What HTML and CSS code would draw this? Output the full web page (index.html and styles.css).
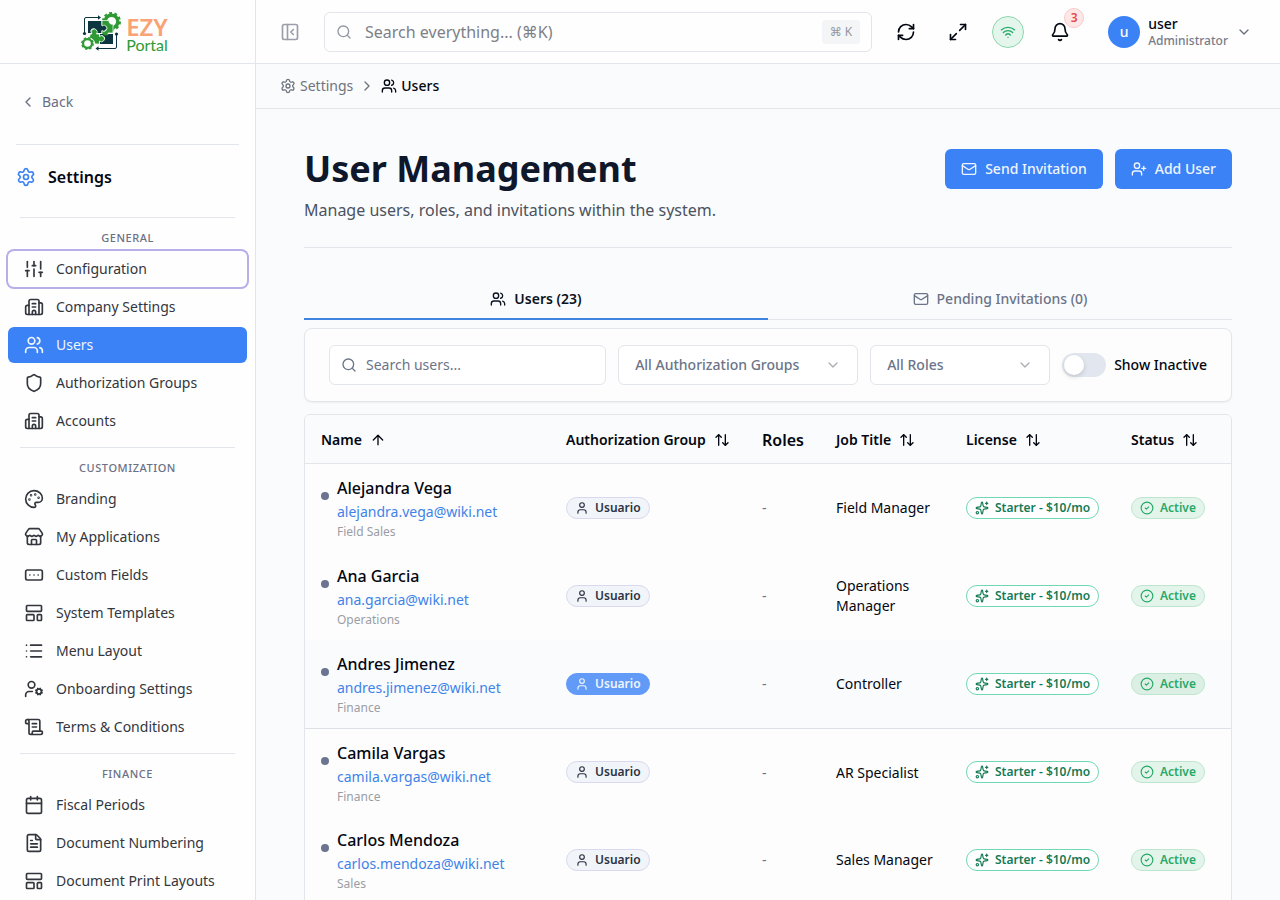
FILE: index.html
```html
<!DOCTYPE html>
<html lang="en">
<head>
  <meta charset="UTF-8" />
  <meta name="viewport" content="width=device-width, initial-scale=1" />
  <title>EZY Portal - User Management</title>
  <link rel="stylesheet" href="styles.css">
</head>
<body>
  <!-- icon sprite -->
  <svg class="sprite" aria-hidden="true">
    <symbol id="i-panel" viewBox="0 0 24 24"><rect width="18" height="18" x="3" y="3" rx="2"/><path d="M9 3v18"/><path d="m16 15-3-3 3-3"/></symbol>
    <symbol id="i-search" viewBox="0 0 24 24"><circle cx="11" cy="11" r="8"/><path d="m21 21-4.3-4.3"/></symbol>
    <symbol id="i-refresh" viewBox="0 0 24 24"><path d="M3 12a9 9 0 0 1 9-9 9.75 9.75 0 0 1 6.74 2.74L21 8"/><path d="M21 3v5h-5"/><path d="M21 12a9 9 0 0 1-9 9 9.75 9.75 0 0 1-6.74-2.74L3 16"/><path d="M8 16H3v5"/></symbol>
    <symbol id="i-expand" viewBox="0 0 24 24"><path d="M15 3h6v6"/><path d="m21 3-7 7"/><path d="m3 21 7-7"/><path d="M9 21H3v-6"/></symbol>
    <symbol id="i-wifi" viewBox="0 0 24 24"><path d="M12 20h.01"/><path d="M2 8.82a15 15 0 0 1 20 0"/><path d="M5 12.859a10 10 0 0 1 14 0"/><path d="M8.5 16.429a5 5 0 0 1 7 0"/></symbol>
    <symbol id="i-bell" viewBox="0 0 24 24"><path d="M10.268 21a2 2 0 0 0 3.464 0"/><path d="M3.262 15.326A1 1 0 0 0 4 17h16a1 1 0 0 0 .74-1.673C19.41 13.956 18 12.499 18 8A6 6 0 0 0 6 8c0 4.499-1.411 5.956-2.738 7.326"/></symbol>
    <symbol id="i-down" viewBox="0 0 24 24"><path d="m6 9 6 6 6-6"/></symbol>
    <symbol id="i-left" viewBox="0 0 24 24"><path d="m15 18-6-6 6-6"/></symbol>
    <symbol id="i-right" viewBox="0 0 24 24"><path d="m9 18 6-6-6-6"/></symbol>
    <symbol id="i-settings" viewBox="0 0 24 24"><path d="M9.671 4.136a2.34 2.34 0 0 1 4.659 0 2.34 2.34 0 0 0 3.319 1.915 2.34 2.34 0 0 1 2.33 4.033 2.34 2.34 0 0 0 0 3.831 2.34 2.34 0 0 1-2.33 4.033 2.34 2.34 0 0 0-3.319 1.915 2.34 2.34 0 0 1-4.659 0 2.34 2.34 0 0 0-3.32-1.915 2.34 2.34 0 0 1-2.33-4.033 2.34 2.34 0 0 0 0-3.831A2.34 2.34 0 0 1 6.35 6.051a2.34 2.34 0 0 0 3.319-1.915"/><circle cx="12" cy="12" r="3"/></symbol>
    <symbol id="i-users" viewBox="0 0 24 24"><path d="M16 21v-2a4 4 0 0 0-4-4H6a4 4 0 0 0-4 4v2"/><path d="M16 3.128a4 4 0 0 1 0 7.744"/><path d="M22 21v-2a4 4 0 0 0-3-3.87"/><circle cx="9" cy="7" r="4"/></symbol>
    <symbol id="i-user" viewBox="0 0 24 24"><path d="M19 21v-2a4 4 0 0 0-4-4H9a4 4 0 0 0-4 4v2"/><circle cx="12" cy="7" r="4"/></symbol>
    <symbol id="i-user-plus" viewBox="0 0 24 24"><path d="M16 21v-2a4 4 0 0 0-4-4H6a4 4 0 0 0-4 4v2"/><circle cx="9" cy="7" r="4"/><path d="M19 8v6"/><path d="M22 11h-6"/></symbol>
    <symbol id="i-user-cog" viewBox="0 0 24 24"><path d="M10 15H6a4 4 0 0 0-4 4v2"/><circle cx="9" cy="7" r="4"/><circle cx="18" cy="15" r="3"/><path d="m14.305 16.53.923-.382"/><path d="m15.228 13.852-.923-.383"/><path d="m16.852 12.228-.383-.923"/><path d="m16.852 17.772-.383.924"/><path d="m19.148 12.228.383-.923"/><path d="m19.53 18.696-.382-.924"/><path d="m20.772 13.852.924-.383"/><path d="m20.772 16.148.924.383"/></symbol>
    <symbol id="i-sliders" viewBox="0 0 24 24"><path d="M4 21v-7"/><path d="M4 10V3"/><path d="M12 21v-9"/><path d="M12 8V3"/><path d="M20 21v-5"/><path d="M20 12V3"/><path d="M2 14h4"/><path d="M10 8h4"/><path d="M18 16h4"/></symbol>
    <symbol id="i-building" viewBox="0 0 24 24"><path d="M10 12h4"/><path d="M10 8h4"/><path d="M14 21v-3a2 2 0 0 0-4 0v3"/><path d="M6 10H4a2 2 0 0 0-2 2v7a2 2 0 0 0 2 2h16a2 2 0 0 0 2-2V9a2 2 0 0 0-2-2h-2"/><path d="M6 21V5a2 2 0 0 1 2-2h8a2 2 0 0 1 2 2v16"/></symbol>
    <symbol id="i-shield" viewBox="0 0 24 24"><path d="M20 13c0 5-3.5 7.5-7.66 8.95a1 1 0 0 1-.67-.01C7.5 20.5 4 18 4 13V6a1 1 0 0 1 1-1c2 0 4.5-1.2 6.24-2.72a1.17 1.17 0 0 1 1.52 0C14.51 3.81 17 5 19 5a1 1 0 0 1 1 1z"/></symbol>
    <symbol id="i-palette" viewBox="0 0 24 24"><path d="M12 22a1 1 0 0 1 0-20 10 9 0 0 1 10 9 5 5 0 0 1-5 5h-2.25a1.75 1.75 0 0 0-1.4 2.8l.3.4a1.75 1.75 0 0 1-1.4 2.8z"/><circle cx="13.5" cy="6.5" r=".5"/><circle cx="17.5" cy="10.5" r=".5"/><circle cx="6.5" cy="12.5" r=".5"/><circle cx="8.5" cy="7.5" r=".5"/></symbol>
    <symbol id="i-store" viewBox="0 0 24 24"><path d="M15 21v-5a1 1 0 0 0-1-1h-4a1 1 0 0 0-1 1v5"/><path d="M17.774 10.31a1.12 1.12 0 0 0-1.549 0 2.5 2.5 0 0 1-3.451 0 1.12 1.12 0 0 0-1.548 0 2.5 2.5 0 0 1-3.452 0 1.12 1.12 0 0 0-1.549 0 2.5 2.5 0 0 1-3.77-3.248l2.889-4.184A2 2 0 0 1 7 2h10a2 2 0 0 1 1.653.873l2.895 4.192a2.5 2.5 0 0 1-3.774 3.244"/><path d="M4 10.95V19a2 2 0 0 0 2 2h12a2 2 0 0 0 2-2v-8.05"/></symbol>
    <symbol id="i-field" viewBox="0 0 24 24"><rect width="20" height="12" x="2" y="6" rx="2"/><path d="M12 12h.01"/><path d="M17 12h.01"/><path d="M7 12h.01"/></symbol>
    <symbol id="i-template" viewBox="0 0 24 24"><rect width="18" height="7" x="3" y="3" rx="1"/><rect width="9" height="7" x="3" y="14" rx="1"/><rect width="5" height="7" x="16" y="14" rx="1"/></symbol>
    <symbol id="i-list" viewBox="0 0 24 24"><path d="M3 5h.01"/><path d="M3 12h.01"/><path d="M3 19h.01"/><path d="M8 5h13"/><path d="M8 12h13"/><path d="M8 19h13"/></symbol>
    <symbol id="i-scroll" viewBox="0 0 24 24"><path d="M15 12h-5"/><path d="M15 8h-5"/><path d="M19 17V5a2 2 0 0 0-2-2H4"/><path d="M8 21h12a2 2 0 0 0 2-2v-1a1 1 0 0 0-1-1H11a1 1 0 0 0-1 1v1a2 2 0 1 1-4 0V5a2 2 0 1 0-4 0v2a1 1 0 0 0 1 1h3"/></symbol>
    <symbol id="i-calendar" viewBox="0 0 24 24"><path d="M8 2v4"/><path d="M16 2v4"/><rect width="18" height="18" x="3" y="4" rx="2"/><path d="M3 10h18"/></symbol>
    <symbol id="i-file" viewBox="0 0 24 24"><path d="M6 22a2 2 0 0 1-2-2V4a2 2 0 0 1 2-2h8a2.4 2.4 0 0 1 1.704.706l3.588 3.588A2.4 2.4 0 0 1 20 8v12a2 2 0 0 1-2 2z"/><path d="M14 2v5a1 1 0 0 0 1 1h5"/><path d="M10 9H8"/><path d="M16 13H8"/><path d="M16 17H8"/></symbol>
    <symbol id="i-mail" viewBox="0 0 24 24"><path d="m22 7-8.991 5.727a2 2 0 0 1-2.009 0L2 7"/><rect x="2" y="4" width="20" height="16" rx="2"/></symbol>
    <symbol id="i-sparkles" viewBox="0 0 24 24"><path d="M11.017 2.814a1 1 0 0 1 1.966 0l1.051 5.558a2 2 0 0 0 1.594 1.594l5.558 1.051a1 1 0 0 1 0 1.966l-5.558 1.051a2 2 0 0 0-1.594 1.594l-1.051 5.558a1 1 0 0 1-1.966 0l-1.051-5.558a2 2 0 0 0-1.594-1.594l-5.558-1.051a1 1 0 0 1 0-1.966l5.558-1.051a2 2 0 0 0 1.594-1.594z"/><path d="M20 2v4"/><path d="M22 4h-4"/><circle cx="4" cy="20" r="2"/></symbol>
    <symbol id="i-check" viewBox="0 0 24 24"><circle cx="12" cy="12" r="10"/><path d="m9 12 2 2 4-4"/></symbol>
    <symbol id="i-up" viewBox="0 0 24 24"><path d="m5 12 7-7 7 7"/><path d="M12 19V5"/></symbol>
    <symbol id="i-sort" viewBox="0 0 24 24"><path d="m21 16-4 4-4-4"/><path d="M17 20V4"/><path d="m3 8 4-4 4 4"/><path d="M7 4v16"/></symbol>
  </svg>

  <div class="app">
    <aside class="sidebar">
      <a href="#" class="brand" aria-label="EZY Portal">
        <svg class="brand-mark" viewBox="0 0 40 40">
          <circle cx="30.5" cy="9.5" r="6.3" fill="none" stroke="#2f9a35" stroke-width="3.4"/>
          <circle cx="30.5" cy="9.5" r="8.4" fill="none" stroke="#2f9a35" stroke-width="2.2" stroke-dasharray="2.9 2.38"/>
          <path d="M7 9h13.5v4.500a3 3 0 1 1 0 5V21H15a3 3 0 1 0-5 0H7z" fill="#0c3540"/>
          <path d="M21 8.5h7a3 3 0 0 0 4 3.500v9h-5a3.2 3.2 0 1 1-6 0v-2.500a3 3 0 1 0 0-4.500z" fill="#2f9a35" stroke="#fff" stroke-width=".7"/>
          <path d="M19 22h3a3.2 3.2 0 0 0 5.500 0H32v10H19v-3.500a3 3 0 1 0 0-4.500z" fill="#0c3540"/>
          <path d="M9.5 22h1.500a3 3 0 1 1 4.500 0H18.500v2.500a3 3 0 1 1 0 4.500v3h-4.500a7 7 0 0 0-6-6z" fill="#2f9a35" stroke="#fff" stroke-width=".7"/>
          <circle cx="6.5" cy="31.5" r="6.5" fill="#fff"/>
          <circle cx="6.5" cy="31.5" r="4.4" fill="none" stroke="#2f9a35" stroke-width="2.2"/>
          <circle cx="6.5" cy="31.5" r="5.7" fill="none" stroke="#2f9a35" stroke-width="1.5" stroke-dasharray="2.4 2.08"/>
          <path d="M3.5 21V7A1.5 1.5 0 0 1 5 5.5h13M35.5 22v13a1.5 1.5 0 0 1-1.5 1.5H16" fill="none" stroke="#0c3540" stroke-width="1"/>
          <path d="m17 3.300 3 2.200-3 2.200zM17.500 34.300l-3 2.200 3 2.200z" fill="#0c3540"/>
          <circle cx="3.5" cy="21.5" r="1.6" fill="#0c3540"/>
          <circle cx="35.5" cy="22" r="1.6" fill="#0c3540"/>
        </svg>
        <span class="brand-text">
          <span class="brand-top">EZY</span>
          <span class="brand-bottom">Portal</span>
        </span>
      </a>

      <div class="back-row">
        <a href="#" class="back-link"><svg class="icon icon-sm"><use href="#i-left"/></svg>Back</a>
      </div>

      <h2 class="sidebar-title"><svg class="icon icon-lg"><use href="#i-settings"/></svg>Settings</h2>

      <nav class="nav">
        <div class="nav-section">
          <div class="nav-label">GENERAL</div>
          <a href="#" class="nav-item focused"><svg class="icon icon-lg"><use href="#i-sliders"/></svg>Configuration</a>
          <a href="#" class="nav-item"><svg class="icon icon-lg"><use href="#i-building"/></svg>Company Settings</a>
          <a href="#" class="nav-item active"><svg class="icon icon-lg"><use href="#i-users"/></svg>Users</a>
          <a href="#" class="nav-item"><svg class="icon icon-lg"><use href="#i-shield"/></svg>Authorization Groups</a>
          <a href="#" class="nav-item"><svg class="icon icon-lg"><use href="#i-building"/></svg>Accounts</a>
        </div>
        <div class="nav-section">
          <div class="nav-label">CUSTOMIZATION</div>
          <a href="#" class="nav-item"><svg class="icon icon-lg"><use href="#i-palette"/></svg>Branding</a>
          <a href="#" class="nav-item"><svg class="icon icon-lg"><use href="#i-store"/></svg>My Applications</a>
          <a href="#" class="nav-item"><svg class="icon icon-lg"><use href="#i-field"/></svg>Custom Fields</a>
          <a href="#" class="nav-item"><svg class="icon icon-lg"><use href="#i-template"/></svg>System Templates</a>
          <a href="#" class="nav-item"><svg class="icon icon-lg"><use href="#i-list"/></svg>Menu Layout</a>
          <a href="#" class="nav-item"><svg class="icon icon-lg"><use href="#i-user-cog"/></svg>Onboarding Settings</a>
          <a href="#" class="nav-item"><svg class="icon icon-lg"><use href="#i-scroll"/></svg>Terms &amp; Conditions</a>
        </div>
        <div class="nav-section">
          <div class="nav-label">FINANCE</div>
          <a href="#" class="nav-item"><svg class="icon icon-lg"><use href="#i-calendar"/></svg>Fiscal Periods</a>
          <a href="#" class="nav-item"><svg class="icon icon-lg"><use href="#i-file"/></svg>Document Numbering</a>
          <a href="#" class="nav-item"><svg class="icon icon-lg"><use href="#i-template"/></svg>Document Print Layouts</a>
        </div>
      </nav>
    </aside>

    <div class="content">
      <header class="topbar">
        <button class="icon-btn muted" aria-label="Collapse sidebar"><svg class="icon icon-lg"><use href="#i-panel"/></svg></button>
        <div class="global-search">
          <svg class="icon icon-sm"><use href="#i-search"/></svg>
          <input type="text" placeholder="Search everything... (⌘K)" aria-label="Search everything" />
          <kbd>⌘ K</kbd>
        </div>
        <div class="actions">
          <button class="icon-btn" aria-label="Refresh"><svg class="icon icon-lg"><use href="#i-refresh"/></svg></button>
          <button class="icon-btn" aria-label="Full screen"><svg class="icon icon-lg"><use href="#i-expand"/></svg></button>
          <button class="wifi-btn" aria-label="Connection"><svg class="icon icon-sm"><use href="#i-wifi"/></svg></button>
          <button class="icon-btn bell" aria-label="Notifications"><svg class="icon icon-lg"><use href="#i-bell"/></svg><span class="count">3</span></button>
        </div>
        <button class="user-menu">
          <span class="avatar">u</span>
          <span class="user-text">
            <span class="user-name">user</span>
            <span class="user-role">Administrator</span>
          </span>
          <svg class="icon icon-sm"><use href="#i-down"/></svg>
        </button>
      </header>

      <nav class="breadcrumb" aria-label="Breadcrumb">
        <a href="#"><svg class="icon icon-sm"><use href="#i-settings"/></svg>Settings</a>
        <svg class="icon icon-sm"><use href="#i-right"/></svg>
        <a href="#" class="current"><svg class="icon icon-sm"><use href="#i-users"/></svg>Users</a>
      </nav>

      <main class="page">
        <div class="page-head">
          <div>
            <h1>User Management</h1>
            <p>Manage users, roles, and invitations within the system.</p>
          </div>
          <div class="page-actions">
            <button class="btn"><svg class="icon icon-sm"><use href="#i-mail"/></svg>Send Invitation</button>
            <button class="btn"><svg class="icon icon-sm"><use href="#i-user-plus"/></svg>Add User</button>
          </div>
        </div>

        <div class="tabs" role="tablist">
          <button class="tab selected" role="tab" aria-selected="true"><svg class="icon icon-sm"><use href="#i-users"/></svg>Users (23)</button>
          <button class="tab" role="tab" aria-selected="false"><svg class="icon icon-sm"><use href="#i-mail"/></svg>Pending Invitations (0)</button>
        </div>

        <div class="filters">
          <div class="filter-search">
            <svg class="icon icon-sm"><use href="#i-search"/></svg>
            <input type="text" placeholder="Search users..." aria-label="Search users" />
          </div>
          <div class="select-box groups">
            <select aria-label="Authorization group"><option>All Authorization Groups</option></select>
            <svg class="icon icon-sm"><use href="#i-down"/></svg>
          </div>
          <div class="select-box roles">
            <select aria-label="Role"><option>All Roles</option></select>
            <svg class="icon icon-sm"><use href="#i-down"/></svg>
          </div>
          <div class="toggle">
            <input type="checkbox" id="showInactive" role="switch" />
            <label for="showInactive">Show Inactive</label>
          </div>
        </div>

        <div class="table-wrap">
          <table>
            <colgroup>
              <col class="c-name" /><col class="c-group" /><col class="c-roles" /><col class="c-job" /><col class="c-license" /><col class="c-status" />
            </colgroup>
            <thead>
              <tr>
                <th><button class="sort">Name<svg class="icon icon-sm"><use href="#i-up"/></svg></button></th>
                <th><button class="sort">Authorization Group<svg class="icon icon-sm"><use href="#i-sort"/></svg></button></th>
                <th>Roles</th>
                <th><button class="sort">Job Title<svg class="icon icon-sm"><use href="#i-sort"/></svg></button></th>
                <th><button class="sort">License<svg class="icon icon-sm"><use href="#i-sort"/></svg></button></th>
                <th><button class="sort">Status<svg class="icon icon-sm"><use href="#i-sort"/></svg></button></th>
              </tr>
            </thead>
            <tbody>
              <tr>
                <td><div class="person"><span class="dot"></span><div><div class="name">Alejandra Vega</div><a href="#" class="email">alejandra.vega@wiki.net</a><div class="dept">Field Sales</div></div></div></td>
                <td><span class="badge group"><svg class="icon"><use href="#i-user"/></svg>Usuario</span></td>
                <td class="none">-</td>
                <td>Field Manager</td>
                <td><span class="badge license"><svg class="icon"><use href="#i-sparkles"/></svg>Starter - $10/mo</span></td>
                <td><span class="badge status"><svg class="icon"><use href="#i-check"/></svg>Active</span></td>
              </tr>
              <tr>
                <td><div class="person"><span class="dot"></span><div><div class="name">Ana Garcia</div><a href="#" class="email">ana.garcia@wiki.net</a><div class="dept">Operations</div></div></div></td>
                <td><span class="badge group"><svg class="icon"><use href="#i-user"/></svg>Usuario</span></td>
                <td class="none">-</td>
                <td>Operations Manager</td>
                <td><span class="badge license"><svg class="icon"><use href="#i-sparkles"/></svg>Starter - $10/mo</span></td>
                <td><span class="badge status"><svg class="icon"><use href="#i-check"/></svg>Active</span></td>
              </tr>
              <tr class="highlight">
                <td><div class="person"><span class="dot"></span><div><div class="name">Andres Jimenez</div><a href="#" class="email">andres.jimenez@wiki.net</a><div class="dept">Finance</div></div></div></td>
                <td><span class="badge group"><svg class="icon"><use href="#i-user"/></svg>Usuario</span></td>
                <td class="none">-</td>
                <td>Controller</td>
                <td><span class="badge license"><svg class="icon"><use href="#i-sparkles"/></svg>Starter - $10/mo</span></td>
                <td><span class="badge status"><svg class="icon"><use href="#i-check"/></svg>Active</span></td>
              </tr>
              <tr>
                <td><div class="person"><span class="dot"></span><div><div class="name">Camila Vargas</div><a href="#" class="email">camila.vargas@wiki.net</a><div class="dept">Finance</div></div></div></td>
                <td><span class="badge group"><svg class="icon"><use href="#i-user"/></svg>Usuario</span></td>
                <td class="none">-</td>
                <td>AR Specialist</td>
                <td><span class="badge license"><svg class="icon"><use href="#i-sparkles"/></svg>Starter - $10/mo</span></td>
                <td><span class="badge status"><svg class="icon"><use href="#i-check"/></svg>Active</span></td>
              </tr>
              <tr>
                <td><div class="person"><span class="dot"></span><div><div class="name">Carlos Mendoza</div><a href="#" class="email">carlos.mendoza@wiki.net</a><div class="dept">Sales</div></div></div></td>
                <td><span class="badge group"><svg class="icon"><use href="#i-user"/></svg>Usuario</span></td>
                <td class="none">-</td>
                <td>Sales Manager</td>
                <td><span class="badge license"><svg class="icon"><use href="#i-sparkles"/></svg>Starter - $10/mo</span></td>
                <td><span class="badge status"><svg class="icon"><use href="#i-check"/></svg>Active</span></td>
              </tr>
            </tbody>
          </table>
        </div>
      </main>
    </div>
  </div>
</body>
</html>
```

FILE: styles.css
```css
* {
  box-sizing: border-box;
}
body {
  margin: 0;
  font-family: "Noto Sans", "DejaVu Sans", sans-serif;
  font-size: 14px;
  line-height: 20px;
  color: #030711;
  background: #fafbfd;
}
h1, h2, p {
  margin: 0;
}
a {
  color: inherit;
  text-decoration: none;
}
button, input, select {
  font: inherit;
  color: inherit;
}
button {
  background: none;
  border: none;
  padding: 0;
  cursor: pointer;
}
.sprite {
  display: none;
}
.icon {
  width: 14px;
  height: 14px;
  flex: none;
  fill: none;
  stroke: currentColor;
  stroke-width: 2;
  stroke-linecap: round;
  stroke-linejoin: round;
}
.icon-sm {
  width: 16px;
  height: 16px;
}
.icon-lg {
  width: 20px;
  height: 20px;
}
.app {
  display: flex;
  height: 100vh;
  overflow: hidden;
}

/* sidebar */
.sidebar {
  width: 256px;
  flex: none;
  overflow: hidden;
  background: #fefefe;
  border-right: 1px solid #e2e5ea;
}
.brand {
  display: flex;
  align-items: center;
  justify-content: center;
  gap: 5px;
  height: 64px;
  padding-right: 6px;
  border-bottom: 1px solid #e2e5ea;
}
.brand-mark {
  width: 40px;
  height: 40px;
}
.brand-text {
  display: flex;
  flex-direction: column;
  align-items: center;
  padding-top: 6px;
}
.brand-top {
  font-size: 24px;
  font-weight: 600;
  line-height: 20px;
  color: #f9a273;
}
.brand-bottom {
  font-family: Lato, sans-serif;
  font-size: 16px;
  line-height: 16px;
  color: #2f9a35;
}
.back-row {
  margin: 0 16px;
  padding: 28px 4px 32px;
  border-bottom: 1px solid #e2e5ea;
}
.back-link {
  display: flex;
  align-items: center;
  gap: 6px;
  color: #6b7085;
}
.sidebar-title {
  display: flex;
  align-items: center;
  gap: 12px;
  padding: 20px 16px;
  font-size: 16px;
  font-weight: 600;
  line-height: 24px;
}
.sidebar-title .icon {
  color: #3b82f6;
}
.nav {
  padding: 0 8px;
}
.nav-section {
  display: flex;
  flex-direction: column;
  gap: 2px;
  margin-top: 8px;
}
.nav-label {
  margin: 0 12px 3px;
  padding-top: 12px;
  border-top: 1px solid #e2e5ea;
  font-size: 11px;
  font-weight: 500;
  line-height: 16px;
  letter-spacing: 0.05em;
  text-align: center;
  color: #6b7085;
}
.nav-item {
  display: flex;
  align-items: center;
  gap: 12px;
  height: 36px;
  padding: 0 16px;
  border-radius: 6px;
  color: #33363d;
}
.nav-item.focused {
  box-shadow: 0 0 0 2px #b6afe8;
}
.nav-item.active {
  background: #3b82f6;
  color: #eef5ff;
}

/* top bar */
.content {
  flex: 1;
  min-width: 0;
  overflow: hidden;
}
.topbar {
  display: flex;
  align-items: center;
  gap: 14px;
  height: 64px;
  padding: 0 28px 0 14px;
  background: #fefefe;
  border-bottom: 1px solid #e2e5ea;
}
.icon-btn {
  display: flex;
  align-items: center;
  justify-content: center;
  width: 40px;
  height: 40px;
  position: relative;
}
.icon-btn.muted {
  color: #9a9eab;
}
.global-search {
  display: flex;
  align-items: center;
  flex: 1;
  gap: 13px;
  height: 40px;
  padding: 0 11px;
  border: 1px solid #e2e5ea;
  border-radius: 6px;
  color: #92969f;
}
.global-search input {
  flex: 1;
  min-width: 0;
  padding: 0;
  border: none;
  background: none;
  font-size: 16px;
  outline: none;
}
.global-search input::placeholder {
  color: #7d8087;
}
kbd {
  padding: 2px 8px;
  border-radius: 4px;
  background: #f3f5f7;
  font-family: inherit;
  font-size: 12px;
}
.actions {
  display: flex;
  align-items: center;
  gap: 12px;
}
.wifi-btn {
  display: flex;
  align-items: center;
  justify-content: center;
  width: 32px;
  height: 32px;
  margin: 0 4px 0 2px;
  border: 1px solid #8bd6ae;
  border-radius: 50%;
  background: #e4f6ec;
  color: #27a86b;
}
.count {
  position: absolute;
  top: -4px;
  right: -4px;
  width: 20px;
  height: 20px;
  border: 1px solid #fbcaca;
  border-radius: 50%;
  background: #fde7e7;
  color: #e5484d;
  font-size: 12px;
  font-weight: 600;
  line-height: 18px;
}
.user-menu {
  display: flex;
  align-items: center;
  gap: 8px;
  margin-left: 14px;
  text-align: left;
}
.user-menu .icon {
  color: #6b7080;
}
.avatar {
  width: 32px;
  height: 32px;
  border-radius: 50%;
  background: #3b82f6;
  color: #fff;
  font-weight: 500;
  line-height: 32px;
  text-align: center;
}
.user-text {
  display: flex;
  flex-direction: column;
}
.user-name {
  font-weight: 500;
  line-height: 18px;
}
.user-role {
  font-size: 12px;
  font-weight: 500;
  line-height: 16px;
  color: #777c89;
}
.breadcrumb {
  display: flex;
  align-items: center;
  gap: 6px;
  height: 45px;
  padding: 0 24px;
  border-bottom: 1px solid #e2e5ea;
  color: #6f737c;
}
.breadcrumb a {
  display: flex;
  align-items: center;
  gap: 4px;
}
.breadcrumb .current {
  font-weight: 500;
  color: #030711;
}

/* page */
.page {
  padding: 40px 48px;
}
.page-head {
  display: flex;
  align-items: flex-start;
  justify-content: space-between;
  padding-bottom: 25px;
  border-bottom: 1px solid #e2e5ea;
}
h1 {
  font-size: 36px;
  font-weight: 700;
  line-height: 40px;
  color: #0f172a;
}
.page-head p {
  margin-top: 9px;
  font-size: 16px;
  line-height: 24px;
  color: #4b5260;
}
.page-actions {
  display: flex;
  gap: 12px;
}
.btn {
  display: flex;
  align-items: center;
  gap: 8px;
  height: 40px;
  padding: 0 16px;
  border-radius: 6px;
  background: #3b82f6;
  color: #eef5ff;
  font-weight: 500;
}
.tabs {
  display: flex;
  height: 40px;
  margin-top: 32px;
  border-bottom: 1px solid #e2e5ea;
}
.tab {
  display: flex;
  align-items: center;
  justify-content: center;
  flex: 1;
  gap: 8px;
  height: 40px;
  border-bottom: 2px solid transparent;
  color: #6b7488;
  font-weight: 500;
}
.tab.selected {
  border-color: #3f83e0;
  color: #0b1220;
  font-weight: 600;
}
.filters {
  display: flex;
  align-items: center;
  gap: 12px;
  margin-top: 8px;
  padding: 16px 24px;
  border: 1px solid #e2e5ea;
  border-radius: 8px;
  background: #fdfdfd;
  box-shadow: 0 1px 2px rgba(0, 0, 0, 0.05);
}
.filter-search {
  display: flex;
  align-items: center;
  flex: 1;
  gap: 9px;
  height: 40px;
  padding: 0 11px;
  border: 1px solid #e2e5ea;
  border-radius: 6px;
  background: #fff;
  color: #6b7488;
}
.filter-search input {
  flex: 1;
  min-width: 0;
  padding: 0;
  border: none;
  background: none;
  outline: none;
}
.filter-search input::placeholder {
  color: #6b7488;
}
.select-box {
  display: grid;
  align-items: center;
}
.select-box.groups {
  width: 240px;
}
.select-box.roles {
  width: 180px;
}
.select-box select {
  grid-area: 1 / 1;
  width: 100%;
  height: 40px;
  padding: 0 40px 0 16px;
  appearance: none;
  border: 1px solid #e2e5ea;
  border-radius: 6px;
  background: #fff;
  color: #6b7488;
  font-weight: 500;
}
.select-box .icon {
  grid-area: 1 / 1;
  justify-self: end;
  margin-right: 17px;
  color: #aaaeb8;
  pointer-events: none;
}
.toggle {
  display: flex;
  align-items: center;
  gap: 8px;
  font-weight: 500;
}
.toggle input {
  appearance: none;
  display: flex;
  width: 44px;
  height: 24px;
  margin: 0;
  padding: 2px;
  border-radius: 12px;
  background: #e2e6ee;
}
.toggle input::before {
  content: "";
  width: 20px;
  height: 20px;
  border-radius: 50%;
  background: #fff;
  box-shadow: 0 2px 5px rgba(0, 0, 0, 0.15);
}
.toggle input:checked {
  justify-content: flex-end;
  background: #3b82f6;
}

/* users table */
.table-wrap {
  margin-top: 12px;
  border: 1px solid #e2e5ea;
  border-radius: 6px;
  overflow: hidden;
}
table {
  width: 100%;
  table-layout: fixed;
  border-collapse: separate;
  border-spacing: 0;
}
.c-name { width: 245px; }
.c-group { width: 196px; }
.c-roles { width: 74px; }
.c-job { width: 130px; }
.c-license { width: 165px; }
.c-status { width: 116px; }
th {
  height: 49px;
  padding: 2px 16px 0;
  border-bottom: 1px solid #e2e5ea;
  background: #f9fbfc;
  font-size: 16px;
  font-weight: 600;
  text-align: left;
}
.sort {
  display: flex;
  align-items: center;
  gap: 8px;
  font-size: 14px;
  font-weight: 600;
  white-space: nowrap;
}
td {
  height: 88px;
  padding: 0 16px;
  background: #fdfdfd;
}
.highlight td {
  background: #fafbfd;
}
.highlight + tr td {
  border-top: 1px solid #dde1e6;
}
.person {
  display: flex;
  align-items: flex-start;
  gap: 8px;
}
.dot {
  width: 8px;
  height: 8px;
  flex: none;
  margin-top: 16px;
  border-radius: 50%;
  background: #6b7590;
}
.name {
  font-size: 16px;
  font-weight: 500;
  line-height: 24px;
}
.email {
  display: block;
  line-height: 24px;
  color: #3f83e8;
}
.dept {
  font-size: 12px;
  line-height: 16px;
  color: #9a9da5;
}
.none {
  color: #6b7080;
}
.badge {
  display: inline-flex;
  align-items: center;
  gap: 6px;
  padding: 2px 8px;
  border: 1px solid;
  border-radius: 11px;
  font-size: 12px;
  font-weight: 600;
  line-height: 16px;
  white-space: nowrap;
}
.badge.group {
  background: #f1f4f8;
  border-color: #d9d8f0;
  color: #2b3243;
}
.highlight .badge.group {
  background: #629af8;
  border-color: #629af8;
  color: #eef5ff;
}
.badge.license {
  background: #fff;
  border-color: #6fd8b2;
  color: #157a55;
}
.badge.status {
  background: #e3f5ea;
  border-color: #bfe5cf;
  color: #28a869;
}
.highlight .badge.status {
  background: #dcefe4;
}
```
